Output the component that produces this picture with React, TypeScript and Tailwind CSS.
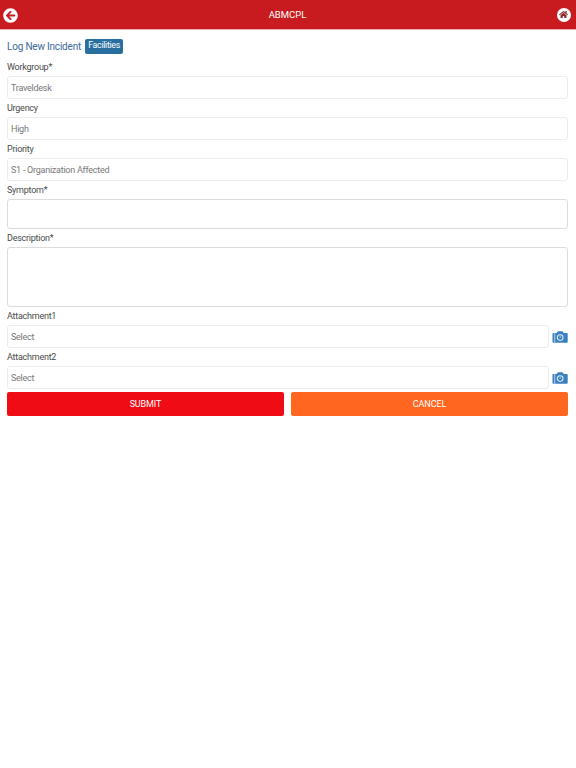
import { FaArrowCircleLeft, FaHome } from 'react-icons/fa'

function Label({ children }: { children: string }) {
  return <div className="h-[18px] text-[9px] leading-[18px] tracking-[-0.25px] text-[#4a4a4a]">{children}</div>
}

function ReadField({ value }: { value: string }) {
  return (
    <div className="h-[23px] rounded-[3px] border border-[#ececec] bg-white px-[3px] text-[9px] leading-[22px] tracking-[-0.25px] text-[#777]">
      {value}
    </div>
  )
}

function CameraIcon() {
  return (
    <svg viewBox="0 0 16 12" className="h-[12px] w-[16px] shrink-0">
      <path
        d="M1.200 2h3.500l1-1.500c.1-.2.300-.3.500-.3h4c.2 0 .4.100.5.300l1 1.500h3.300c.4 0 .7.300.7.700v8.400c0 .4-.3.700-.7.700H1.200c-.4 0-.7-.3-.7-.7V2.700c0-.4.300-.7.700-.7z"
        fill="#3a80bf"
      />
      <rect x="2.400" y="2" width="0.800" height="9.800" fill="#d5e5f3" />
      <circle cx="8.200" cy="6.600" r="3.300" fill="#e4eff8" />
      <circle cx="8.200" cy="6.600" r="2.300" fill="#3a80bf" />
      <path d="M8.200 5v1.800" stroke="#e4eff8" strokeWidth="0.700" />
    </svg>
  )
}

function AttachField({ label }: { label: string }) {
  return (
    <div>
      <Label>{label}</Label>
      <div className="flex items-center gap-[3px]">
        <div className="h-[23px] flex-1 rounded-[3px] border border-[#ececec] bg-white px-[3px] text-[9px] leading-[22px] tracking-[-0.25px] text-[#777]">
          Select
        </div>
        <CameraIcon />
      </div>
    </div>
  )
}

export default function App() {
  return (
    <div className="min-h-[768px] bg-white font-['Roboto',sans-serif]">
      {/* Header */}
      <div className="flex h-[30px] items-center justify-between border-b border-[#e8b0b0] bg-[#c81b20] pl-[3px] pr-[5px]">
        <FaArrowCircleLeft className="mt-[1px] h-[15px] w-[15px] text-white" />
        <span className="mt-[1px] text-[9.500px] text-white">ABMCPL</span>
        <span className="flex h-[14px] w-[14px] items-center justify-center rounded-full bg-white">
          <FaHome className="h-[9px] w-[9px] text-[#8e2a2c]" />
        </span>
      </div>

      <div className="pl-[7px] pr-[8px]">
        <div className="flex h-[28px] items-center gap-[4px] pt-[4px]">
          <span className="text-[10px] tracking-[-0.2px] text-[#3a6a98]">Log New Incident</span>
          <span className="flex h-[15px] w-[38px] items-center justify-center rounded-[2px] bg-[#286f9f] text-[8.800px] tracking-[-0.3px] text-white">
            Facilities
          </span>
        </div>

        <Label>Workgroup*</Label>
        <ReadField value="Traveldesk" />
        <Label>Urgency</Label>
        <ReadField value="High" />
        <Label>Priority</Label>
        <ReadField value="S1 - Organization Affected" />
        <Label>Symptom*</Label>
        <div className="h-[30px] rounded-[3px] border border-[#dcdcdc] bg-white" />
        <Label>Description*</Label>
        <div className="h-[60px] rounded-[3px] border border-[#dcdcdc] bg-white" />
        <AttachField label="Attachment1" />
        <AttachField label="Attachment2" />

        <div className="mt-[3px] flex gap-[7px]">
          <button className="h-[24px] flex-1 rounded-[2px] bg-[#f00c14] pt-[1px] text-[9px] tracking-[-0.1px] text-white">SUBMIT</button>
          <button className="h-[24px] flex-1 rounded-[2px] bg-[#ff6620] pt-[1px] text-[9px] tracking-[-0.1px] text-white">CANCEL</button>
        </div>
      </div>
    </div>
  )
}
